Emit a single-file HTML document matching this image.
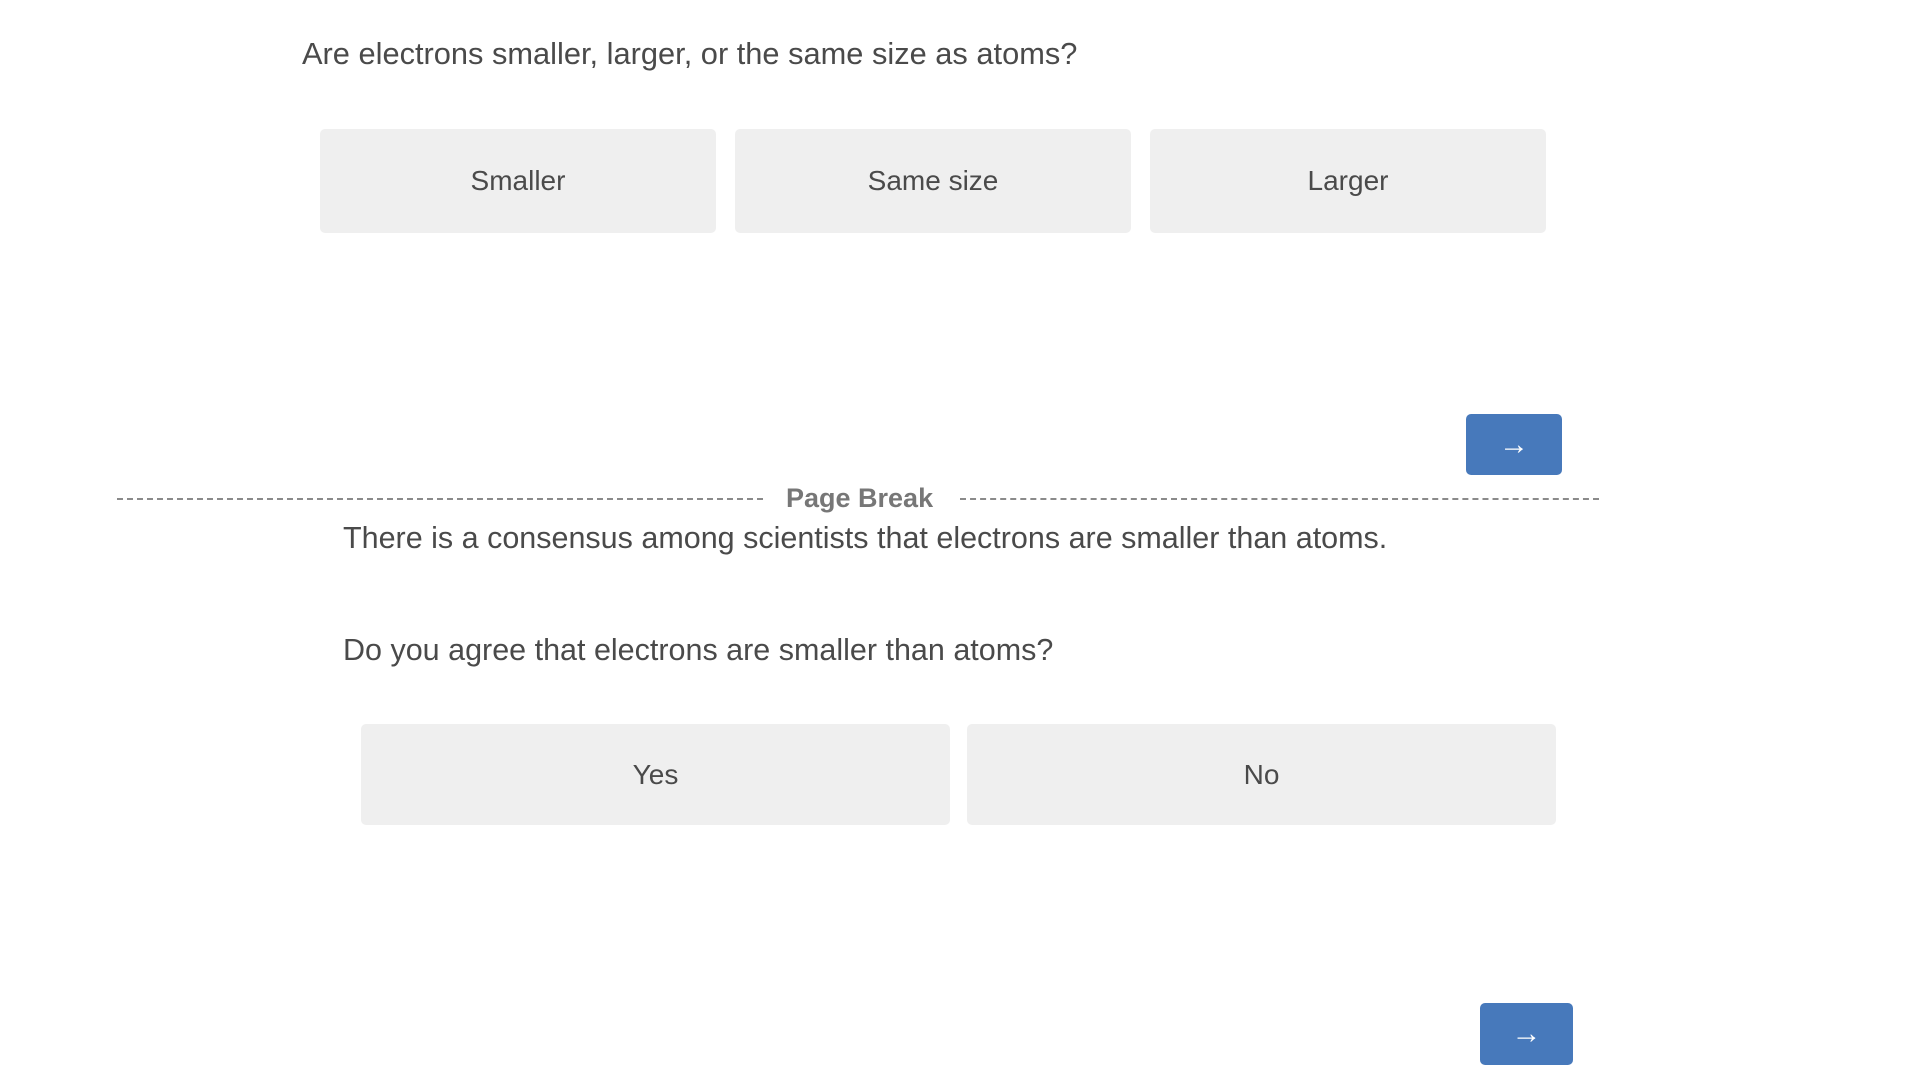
<!DOCTYPE html>
<html><head><style>
body{margin:0;width:1920px;height:1080px;background:#fff;font-family:"Liberation Sans",Arial,sans-serif;color:#4a4a4a;position:relative;overflow:hidden}
.t{position:absolute;white-space:nowrap;font-size:30.5px;line-height:36px}
.b{position:absolute;background:#efefef;border-radius:5px;display:flex;align-items:center;justify-content:center;font-size:28px;color:#4a4a4a}
.n{position:absolute;background:#4779bb;border-radius:5px;display:flex;align-items:center;justify-content:center;color:#fff;font-size:30px}
.d{position:absolute;top:498px;height:0;border-top:2px dashed #8a8a8a}
</style></head><body>
<div class="t" style="left:302px;top:36px;font-size:30.8px">Are electrons smaller, larger, or the same size as atoms?</div>
<div class="b" style="left:320px;top:129px;width:396px;height:104px">Smaller</div>
<div class="b" style="left:735px;top:129px;width:396px;height:104px">Same size</div>
<div class="b" style="left:1150px;top:129px;width:396px;height:104px">Larger</div>
<div class="n" style="left:1466px;top:414px;width:96px;height:61px">→</div>
<div class="d" style="left:117px;width:646px"></div>
<div class="d" style="left:960px;width:639px"></div>
<div class="t" style="left:786px;top:480px;font-size:27px;font-weight:bold;color:#777">Page Break</div>
<div class="t" style="left:343px;top:520px">There is a consensus among scientists that electrons are smaller than atoms.</div>
<div class="t" style="left:343px;top:632px">Do you agree that electrons are smaller than atoms?</div>
<div class="b" style="left:361px;top:724px;width:589px;height:101px">Yes</div>
<div class="b" style="left:967px;top:724px;width:589px;height:101px">No</div>
<div class="n" style="left:1480px;top:1003px;width:93px;height:62px">→</div>
</body></html>
